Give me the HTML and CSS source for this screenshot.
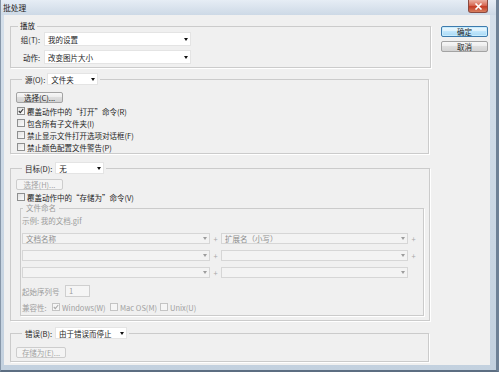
FILE: index.html
```html
<!DOCTYPE html>
<html lang="zh-CN">
<head>
<meta charset="utf-8">
<title>批处理</title>
<link rel="stylesheet" href="styles.css">
</head>
<body>
<div class="window">
  <div class="titlebar">
    <span class="title">批处理</span>
    <div class="close"><svg width="9" height="7" viewBox="0 0 9 7"><path d="M1.5 0.5 L7.5 6.5 M7.5 0.5 L1.5 6.5" stroke="#fff" stroke-width="1.6"/></svg></div>
  </div>
  <div class="frame">
    <div class="client">
      <div class="main">
        <fieldset class="group g-play">
          <legend class="cap">播放</legend>
          <div class="gb">
            <div class="field">
              <span class="lbl">组(T):</span>
              <div class="select s-play"><span>我的设置</span><i class="arrow"></i></div>
            </div>
            <div class="field">
              <span class="lbl">动作:</span>
              <div class="select s-play"><span>改变图片大小</span><i class="arrow"></i></div>
            </div>
          </div>
        </fieldset>

        <fieldset class="group g-source">
          <legend class="combo"><span class="combo-in"><span>源(O):</span><span class="select s-src"><span>文件夹</span><i class="arrow"></i></span></span></legend>
          <div class="gb">
            <button class="btn">选择(C)...</button>
            <div class="check"><span class="box on"><svg width="6" height="6" viewBox="0 0 6 6"><path d="M0.8 3 L2.3 4.6 L5.2 1" fill="none" stroke="#333" stroke-width="1.1"/></svg></span><span>覆盖动作中的“打开”命令(R)</span></div>
            <div class="check"><span class="box"></span><span>包含所有子文件夹(I)</span></div>
            <div class="check"><span class="box"></span><span>禁止显示文件打开选项对话框(F)</span></div>
            <div class="check"><span class="box"></span><span>禁止颜色配置文件警告(P)</span></div>
          </div>
        </fieldset>

        <fieldset class="group g-target">
          <legend class="combo"><span class="combo-in"><span>目标(D):</span><span class="select s-dst"><span>无</span><i class="arrow"></i></span></span></legend>
          <div class="gb">
            <button class="btn dis" disabled>选择(H)...</button>
            <div class="check c-save"><span class="box"></span><span>覆盖动作中的“存储为”命令(V)</span></div>
            <fieldset class="group g-naming">
              <legend class="cap dim">文件命名</legend>
              <div class="gb">
                <div class="ex">示例: 我的文档.gif</div>
                <div class="name-row">
                  <div class="select dis n1"><span>文档名称</span><i class="arrow"></i></div>
                  <span class="plus">+</span>
                  <div class="select dis n2"><span>扩展名（小写）</span><i class="arrow"></i></div>
                  <span class="plus">+</span>
                </div>
                <div class="name-row">
                  <div class="select dis n1"><span></span><i class="arrow"></i></div>
                  <span class="plus">+</span>
                  <div class="select dis n2"><span></span><i class="arrow"></i></div>
                  <span class="plus">+</span>
                </div>
                <div class="name-row">
                  <div class="select dis n1"><span></span><i class="arrow"></i></div>
                  <span class="plus">+</span>
                  <div class="select dis n2"><span></span><i class="arrow"></i></div>
                </div>
                <div class="seq-row">
                  <span class="seq-lbl">起始序列号</span>
                  <span class="input">1</span>
                </div>
                <div class="compat-row">
                  <span class="compat-lbl">兼容性:</span>
                  <span class="opt o-win"><span class="box on dimbox"><svg width="6" height="6" viewBox="0 0 6 6"><path d="M0.8 3 L2.3 4.6 L5.2 1" fill="none" stroke="#aaa" stroke-width="1.1"/></svg></span><span>Windows(W)</span></span>
                  <span class="opt o-mac"><span class="box dimbox"></span><span>Mac OS(M)</span></span>
                  <span class="opt"><span class="box dimbox"></span><span>Unix(U)</span></span>
                </div>
              </div>
            </fieldset>
          </div>
        </fieldset>

        <fieldset class="group g-error">
          <legend class="combo"><span class="combo-in"><span>错误(B):</span><span class="select s-err"><span>由于错误而停止</span><i class="arrow"></i></span></span></legend>
          <div class="gb">
            <button class="btn dis b-save" disabled>存储为(E)...</button>
          </div>
        </fieldset>
      </div>

      <div class="side">
        <button class="btn btn-default">确定</button>
        <button class="btn">取消</button>
      </div>
    </div>
  </div>
</div>
</body>
</html>
```

FILE: styles.css
```css
* { box-sizing: border-box; }
html, body { margin: 0; padding: 0; }
body {
  width: 499px;
  height: 372px;
  overflow: hidden;
  background: #f0f0f0;
  font-family: "Noto Sans CJK SC", "Noto Sans", sans-serif;
  font-size: 7.5px;
  color: #1e1e1e;
}

.window {
  width: 499px;
  height: 372px;
  display: flex;
  flex-direction: column;
  background: linear-gradient(#d5e0eb, #c3d1df);
  border-left: 1px solid #8797a9;
  border-right: 3px solid #6e8196;
  border-bottom: 2px solid #5c6e82;
}

.titlebar {
  flex: none;
  height: 15px;
  display: flex;
  justify-content: space-between;
  padding: 0 8px 0 2px;
  background: linear-gradient(#e6edf5, #cdd9e6);
}
.title { line-height: 15px; font-size: 7.8px; color: #1a1a1a; }
.close {
  width: 20px;
  height: 13px;
  display: flex;
  align-items: center;
  justify-content: center;
  background: linear-gradient(#eab0a3, #d86a55 45%, #c33b25 55%, #d8805f);
  border: 1px solid #8a4a40;
  border-top: 0;
  border-radius: 0 0 3px 3px;
}

.frame {
  flex: 1;
  display: flex;
  padding: 0 6px 5px 3px;
}
.client {
  flex: 1;
  display: flex;
  gap: 10px;
  padding: 6px 2px 0 6px;
  background: #f0f0f0;
}

.main { width: 421px; flex: none; }
.side {
  width: 47px;
  flex: none;
  display: flex;
  flex-direction: column;
  gap: 4px;
  padding-top: 5px;
}

/* group boxes */
.group {
  margin: 0;
  padding: 0;
  min-width: 0;
  border: 1px solid #cbcbcb;
  box-shadow: 1px 1px 0 #fff;
}
.group > legend { padding: 0; }
legend.cap {
  margin-left: 7px;
  padding: 0 2px;
  height: 10px;
  line-height: 10px;
}
legend.combo {
  margin-left: 11px;
  padding: 0 2px 0 3px;
  height: 12px;
}
.combo-in {
  display: flex;
  align-items: center;
  height: 12px;
  gap: 2px;
}

/* select-like controls */
.select {
  display: flex;
  align-items: center;
  justify-content: space-between;
  background: #fff;
  border: 1px solid #e4e4e4;
  padding: 0 2px 0 3px;
  white-space: nowrap;
}
.arrow {
  flex: none;
  width: 0;
  height: 0;
  border-left: 2.5px solid transparent;
  border-right: 2.5px solid transparent;
  border-top: 3px solid #111;
}
.s-play { width: 147px; height: 14px; }
.s-src { width: 51px; height: 12px; }
.s-dst { width: 49px; height: 12px; margin-left: 1px; }
.s-err { width: 72px; height: 12px; margin-left: 1px; }

.select.dis {
  height: 11px;
  background: #f3f3f3;
  border-color: #d6d6d6;
  color: #8e8e8e;
}
.select.dis .arrow { border-top-color: #9c9c9c; }
.n1 { width: 188px; }
.n2 { width: 187px; }

/* buttons */
.btn {
  display: block;
  width: 47px;
  height: 11px;
  padding: 0;
  font: inherit;
  line-height: 9px;
  color: #1e1e1e;
  border: 1px solid #a3a3a3;
  border-radius: 2px;
  background: linear-gradient(#f7f7f7, #ececec 50%, #dedede 50%, #d3d3d3);
}
.btn.dis {
  color: #a3a3a3;
  border-color: #cdcdcd;
  background: #f4f4f4;
}
.btn-default {
  border-color: #3d7bad;
  background: linear-gradient(#ecf7fd, #dcf1fc 50%, #c1e6fc 50%, #a9d9f4);
  box-shadow: inset 0 0 0 1px #c9ecfd;
}

/* play group */
.g-play .gb { padding: 1px 0 3px 0; }
.field { display: flex; align-items: center; height: 14px; }
.field + .field { margin-top: 4px; }
.lbl {
  width: 30px;
  text-align: right;
  padding-right: 1px;
  margin-right: 3px;
  white-space: nowrap;
}

/* source group */
.g-source { margin: 5px 2px 0 0; }
.g-source .gb { padding: 7px 0 0 5px; }
.g-source .btn { margin-bottom: 2px; }

.check {
  display: flex;
  align-items: center;
  gap: 1px;
  height: 12px;
  padding-left: 1px;
  white-space: nowrap;
}
.box {
  flex: none;
  width: 8px;
  height: 8px;
  display: flex;
  align-items: center;
  justify-content: center;
  border: 1px solid #8e8f8f;
  background: linear-gradient(135deg, #e2e2e2, #fcfcfc);
  margin-right: 1px;
}
.box.dimbox { border-color: #c4c4c4; background: #f6f6f6; }

/* target group */
.g-target { margin: 8px 1px 0 0; }
.g-target > .gb { padding: 5px 5px 4px 5px; }
.c-save { margin-top: 1px; }
.g-naming { margin-left: 4px; }
.g-naming > legend.cap { margin-left: 2px; padding: 0 3px; }
.dim { color: #9a9a9a; }
.g-naming .gb { padding: 2px 0 2px 1px; }
.ex { height: 12px; line-height: 12px; color: #9b9b9b; }
.name-row { display: flex; align-items: center; height: 11px; margin-top: 6px; }
.plus { width: 11px; text-align: center; color: #a8a8a8; }
.seq-row {
  display: flex;
  align-items: center;
  height: 12px;
  margin-top: 7px;
  color: #9b9b9b;
}
.seq-lbl { width: 43px; white-space: nowrap; }
.input {
  width: 25px;
  height: 12px;
  line-height: 10px;
  padding-left: 3px;
  border: 1px solid #cfcfcf;
  background: #f5f5f5;
  color: #9b9b9b;
}
.compat-row {
  display: flex;
  align-items: center;
  height: 12px;
  margin-top: 4px;
  color: #a0a0a0;
  white-space: nowrap;
}
.compat-lbl { width: 30px; }
.opt { display: flex; align-items: center; gap: 1px; }
.o-win { width: 58px; }
.o-mac { width: 50px; }

/* error group */
.g-error { margin: 6px 2px 0 0; }
.g-error .gb { padding: 8px 0 3px 5px; }
.b-save { width: 50px; }
```
